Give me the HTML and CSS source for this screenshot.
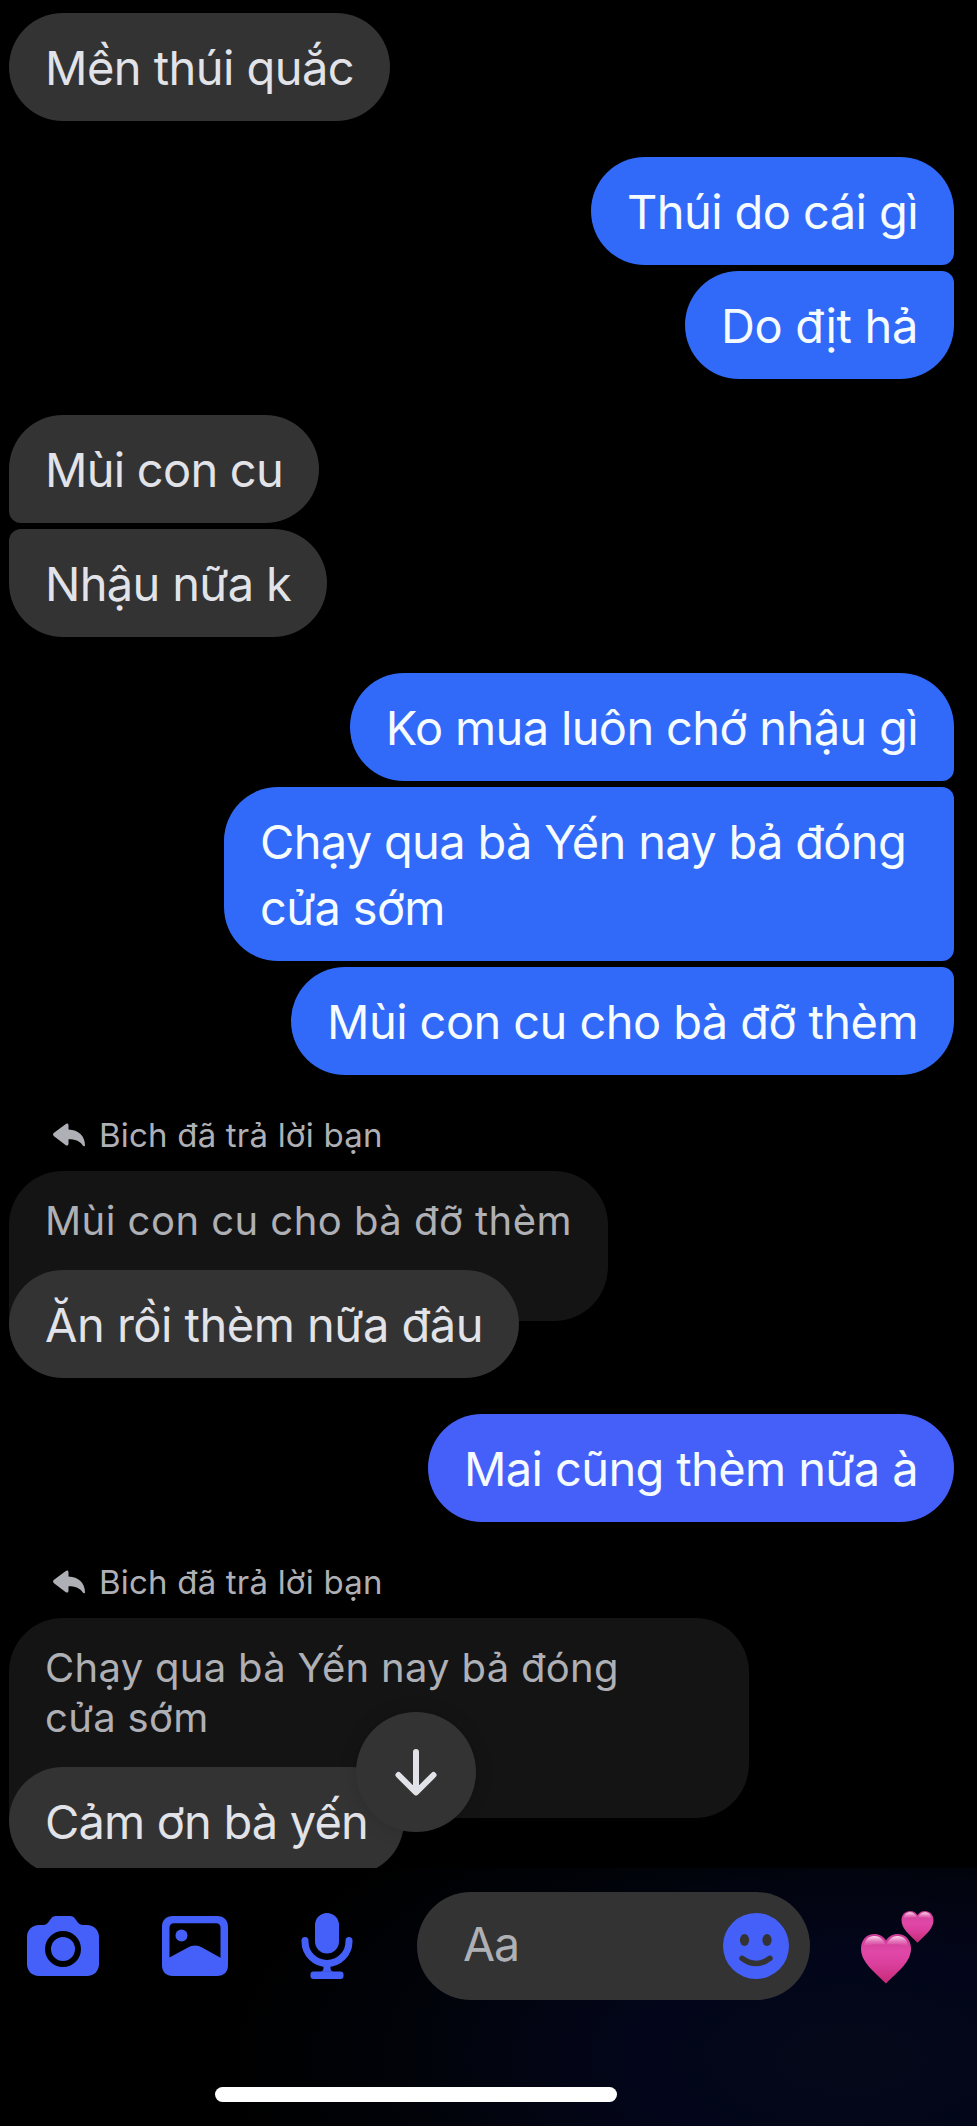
FILE: index.html
```
<!DOCTYPE html>
<html lang="vi">
<head>
<meta charset="utf-8">
<title>Chat</title>
<link rel="stylesheet" href="styles.css">
</head>
<body>
<main class="thread">
  <section class="group in">
    <p class="bubble ls-55">Mền thúi quắc</p>
  </section>
  <section class="group out">
    <p class="bubble first ls-59">Thúi do cái gì</p>
    <p class="bubble last ls-31">Do địt hả</p>
  </section>
  <section class="group in">
    <p class="bubble first ls-75">Mùi con cu</p>
    <p class="bubble last ls-69">Nhậu nữa k</p>
  </section>
  <section class="group out">
    <p class="bubble first ls-65">Ko mua luôn chớ nhậu gì</p>
    <p class="bubble middle wide ls-69">Chạy qua bà Yến nay bả đóng<br>cửa sớm</p>
    <p class="bubble last ls-58">Mùi con cu cho bà đỡ thèm</p>
  </section>
  <section class="group in reply">
    <div class="reply-label">
      <svg class="reply-icon" viewBox="0 0 32 24"><path d="M12.5 1.2c1.5-1.3 3-.7 3 1.1v4.200C25.500 7 32 13 32 22.200c0 1.300-1.400 1.400-2.200.3-3-4.700-8-6.200-14.300-6.200v4.500c0 1.800-1.500 2.400-3 1.100L1 13.200c-1.300-1.100-1.300-2.300 0-3.400z"/></svg>
      <span>Bich đã trả lời bạn</span>
    </div>
    <p class="quote">Mùi con cu cho bà đỡ thèm</p>
    <p class="bubble ls-50">Ăn rồi thèm nữa đâu</p>
  </section>
  <section class="group out violet">
    <p class="bubble ls-62">Mai cũng thèm nữa à</p>
  </section>
  <section class="group in reply">
    <div class="reply-label">
      <svg class="reply-icon" viewBox="0 0 32 24"><path d="M12.5 1.2c1.500-1.300 3-.7 3 1.100v4.200C25.500 7 32 13 32 22.200c0 1.300-1.400 1.400-2.200.3-3-4.700-8-6.200-14.300-6.200v4.500c0 1.800-1.500 2.400-3 1.100L1 13.200c-1.300-1.100-1.300-2.300 0-3.400z"/></svg>
      <span>Bich đã trả lời bạn</span>
    </div>
    <p class="quote long">Chạy qua bà Yến nay bả đóng<br>cửa sớm</p>
    <p class="bubble ls-82">Cảm ơn bà yến</p>
  </section>
  <button class="jump" aria-label="Xuống cuối">
    <svg width="120" height="120" viewBox="0 0 120 120"><path d="M60 40v40M42.500 63 60 80.500 77.500 63" fill="none" stroke="#e2e3e8" stroke-width="6" stroke-linecap="round" stroke-linejoin="round"/><path d="M56 73h8l1 5-5 5-5-5z" fill="#e2e3e8"/></svg>
  </button>
</main>
<footer class="composer">
  <div class="toolbar">
    <svg class="camera" viewBox="0 0 72 60"><path fill-rule="evenodd" d="M12 9h4c2.500 0 4-1 5.500-3l2-2.700C25 1 26.500 0 29 0h14c2.500 0 4 1 5.500 3.300l2 2.700C52 8 53.500 9 56 9h4c7 0 12 5 12 12v27c0 7-5 12-12 12H12C5 60 0 55 0 48V21C0 14 5 9 12 9zM36 15a18 18 0 1 0 0 36 18 18 0 0 0 0-36z"/><circle cx="36" cy="33" r="12"/></svg>
    <svg class="photo" viewBox="0 0 66 60"><path fill-rule="evenodd" d="M11 0h44c7 0 11 4 11 11v38c0 7-4 11-11 11H11C4 60 0 56 0 49V11C0 4 4 0 11 0zM12 7.300c-3 0-4.500 1.700-4.500 4.500v29.700L25.500 31.800c5.500-3 9.500-3 15 0l18 9.900V11.800c0-2.800-1.500-4.500-4.500-4.500z"/><circle cx="19.500" cy="19.500" r="6"/></svg>
    <svg class="mic" viewBox="0 0 52 66"><rect x="14" width="24" height="40.500" rx="12"/><path d="M4 27.500v1a22 22 0 0 0 44 0v-1" fill="none" stroke="#4560f8" stroke-width="7" stroke-linecap="round"/><path d="M22.500 49h7v6c0 2 1 3.700 3.500 3.700H19c2.500 0 3.500-1.700 3.500-3.700z"/><rect x="9.500" y="58.500" width="33" height="7.500" rx="3"/></svg>
    <div class="field">
      <span class="placeholder">Aa</span>
      <svg class="smile" viewBox="0 0 66 66"><circle cx="33" cy="33" r="33" fill="#4560f8"/><ellipse cx="21.500" cy="27" rx="4.600" ry="6" fill="#333"/><ellipse cx="44" cy="27" rx="4.600" ry="6" fill="#333"/><path d="M19 45.300q14 10.500 28 0" fill="none" stroke="#333" stroke-width="5.500" stroke-linecap="round"/></svg>
    </div>
    <svg class="hearts" viewBox="0 0 74 74">
      <defs>
        <linearGradient id="pink" x1="0" y1="0" x2="0" y2="1"><stop offset="0" stop-color="#c93a91"/><stop offset=".35" stop-color="#e048a8"/><stop offset=".62" stop-color="#db3f9c"/><stop offset="1" stop-color="#c42a75"/></linearGradient>
        <linearGradient id="shine" x1="0" y1="0" x2="0" y2="1"><stop offset="0" stop-color="#ffe3f5" stop-opacity=".95"/><stop offset="1" stop-color="#f08ccb" stop-opacity="0"/></linearGradient>
        <g id="heart"><path d="M25 6.500C27.500 2.500 31.500 0 36.500 0 44.500 0 50 6 50 14.500 50 28 37.500 37 25 49.500 12.500 37 0 28 0 14.500 0 6 5.500 0 13.500 0c5 0 9 2.500 11.500 6.500z" fill="url(#pink)"/><path d="M24.500 10.500C22 5 18.500 2 13.500 2 7.500 2 3.500 6 3 12.500c6.500-2.500 15-2.500 21.500-2zM25.500 10.500C28 5 31.500 2 36.500 2c6 0 10 4 10.500 10.500-6.500-2.500-15-2.500-21.500-2z" fill="url(#shine)"/></g>
      </defs>
      <use href="#heart" transform="translate(0 23)"/>
      <use href="#heart" transform="translate(40.500 0) scale(.64)"/>
    </svg>
  </div>
  <div class="home"></div>
</footer>
</body>
</html>
```
FILE: styles.css
```
* { box-sizing: border-box; }

body {
  margin: 0;
  width: 977px;
  height: 2126px;
  overflow: hidden;
  background: #000;
  font-family: Inter, "Liberation Sans", sans-serif;
}

p { margin: 0; }

.thread {
  position: relative;
  display: flex;
  flex-direction: column;
  gap: 36px;
  height: 1868px;
  padding: 13px 23px 0 9px;
  overflow: hidden;
}

.group {
  display: flex;
  flex-direction: column;
  align-items: flex-start;
  flex: none;
  gap: 6px;
}

.group.out { align-items: flex-end; }

.bubble {
  padding: 22px 36px 20px;
  border-radius: 54px;
  background: #333;
  color: #e2e3e8;
  font-size: 47px;
  line-height: 66px;
  white-space: nowrap;
}

.out .bubble { background: #316af8; color: #f5fbff; }
.violet .bubble { background: #4560f8; }

.in .first { border-bottom-left-radius: 12px; }
.in .last { border-top-left-radius: 12px; }
.out .first { border-bottom-right-radius: 12px; }
.out .last { border-top-right-radius: 12px; }
.out .middle { border-top-right-radius: 12px; border-bottom-right-radius: 12px; }

.wide { width: 730px; }

.ls-31 { letter-spacing: -.31px; }
.ls-50 { letter-spacing: -.5px; }
.ls-55 { letter-spacing: -.55px; }
.ls-58 { letter-spacing: -.58px; }
.ls-59 { letter-spacing: -.59px; }
.ls-62 { letter-spacing: -.62px; }
.ls-65 { letter-spacing: -.65px; }
.ls-69 { letter-spacing: -.69px; }
.ls-75 { letter-spacing: -.75px; }
.ls-82 { letter-spacing: -.82px; }

.group.reply { gap: 0; }

.reply-label {
  display: flex;
  align-items: center;
  gap: 14px;
  height: 60px;
  padding: 0 0 13px 44px;
  color: #afb0b5;
  font-size: 33px;
  letter-spacing: .2px;
  line-height: 44px;
}

.reply-icon { width: 32px; height: 24px; fill: #afb0b5; }

.quote {
  height: 150px;
  padding: 25px 36px 0;
  border-radius: 54px 54px 54px 4px;
  background: #141414;
  color: #afb0b5;
  font-size: 40px;
  letter-spacing: .47px;
  line-height: 50px;
  white-space: nowrap;
}

.quote.long { width: 740px; height: 200px; letter-spacing: .3px; }

.quote + .bubble { margin-top: -51px; }

.jump {
  position: absolute;
  left: 356px;
  top: 1712px;
  width: 120px;
  height: 120px;
  padding: 0;
  border: 0;
  border-radius: 50%;
  background: #333;
  box-shadow: 0 0 18px rgba(0, 0, 0, .15);
}

.jump svg { display: block; }

.composer {
  display: flex;
  flex-direction: column;
  align-items: flex-start;
  height: 258px;
  padding-top: 24px;
  background: radial-gradient(ellipse 620px 300px at 850px 190px, #040819 0%, #03061a 35%, #010309 72%, #000 100%);
}

.toolbar {
  display: flex;
  align-items: center;
  width: 977px;
  height: 108px;
  padding-left: 27px;
}

.toolbar > svg { flex: none; fill: #4560f8; }

.camera { width: 72px; height: 60px; }
.photo { width: 66px; height: 60px; margin-left: 63px; }
.mic { width: 52px; height: 66px; margin-left: 73px; }

.field {
  display: flex;
  align-items: center;
  justify-content: space-between;
  width: 393px;
  height: 108px;
  margin-left: 64px;
  padding: 0 21px 0 46px;
  border-radius: 54px;
  background: #333;
}

.placeholder {
  color: #afb0b5;
  font-size: 46.5px;
  letter-spacing: -1px;
  line-height: 66px;
  padding-bottom: 4px;
}

.smile { width: 66px; height: 66px; }

.hearts { width: 74px; height: 74px; margin: 3px 0 0 51px; }

.home {
  width: 402px;
  height: 15px;
  margin: 87px 0 0 215px;
  border-radius: 8px;
  background: #fff;
}
```
